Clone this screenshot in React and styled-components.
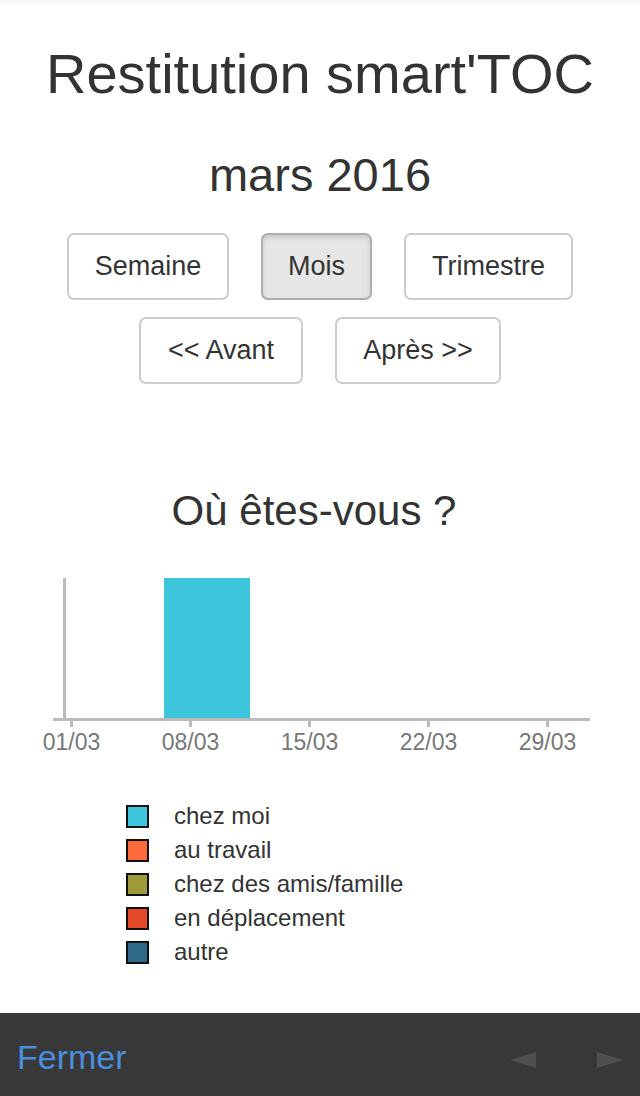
import React from 'react';
import styled, { createGlobalStyle } from 'styled-components';

const GlobalStyle = createGlobalStyle`
  html, body {
    margin: 0;
    padding: 0;
    background: #ffffff;
  }
  body {
    font-family: 'Liberation Sans', Arial, sans-serif;
    color: #333333;
  }
`;

const legend = [
  { label: "chez moi", color: "#3cc5db" },
  { label: "au travail", color: "#fd6a3b" },
  { label: "chez des amis/famille", color: "#9e9a3a" },
  { label: "en déplacement", color: "#e4492a" },
  { label: "autre", color: "#2f6a8a" },
];

const ticks = [
  { x: 71.5, label: "01/03" },
  { x: 190.5, label: "08/03" },
  { x: 309.5, label: "15/03" },
  { x: 428.5, label: "22/03" },
  { x: 547.5, label: "29/03" },
];

const Page = styled.div`
  display: flex;
  flex-direction: column;
  min-height: 100vh;
`;

const TopStrip = styled.div`
  height: 5px;
  background: #f8f8f8;
`;

const Title = styled.h1`
  margin: 37px 0 0;
  font-size: 56px;
  font-weight: 400;
  text-align: center;
  line-height: 64px;
  color: #333;
`;

const Period = styled.h2`
  margin: 43px 0 0;
  font-size: 47px;
  font-weight: 400;
  text-align: center;
  line-height: 52px;
  color: #333;
`;

const ButtonRow = styled.div`
  display: flex;
  justify-content: center;
  gap: 32px;
  margin-top: ${p => p.$top}px;
`;

const Button = styled.button`
  width: ${p => p.$w}px;
  height: 67px;
  padding: 0;
  font-family: 'Liberation Sans', Arial, sans-serif;
  font-size: 27px;
  color: #333;
  background: ${p => (p.$active ? '#e6e6e6' : '#ffffff')};
  border: 2px solid ${p => (p.$active ? '#adadad' : '#cccccc')};
  border-radius: 7px;
  box-shadow: ${p => (p.$active ? 'inset 0 3px 5px rgba(0,0,0,0.125)' : 'none')};
`;

const Question = styled.h3`
  margin: 103px 0 0;
  padding-right: 12px;
  font-size: 42px;
  font-weight: 400;
  text-align: center;
  line-height: 48px;
  color: #333;
`;

const Chart = styled.svg`
  display: block;
  margin-top: 35px;
`;

const Legend = styled.ul`
  list-style: none;
  margin: 39px 0 0;
  padding: 0 0 0 126px;
  display: flex;
  flex-direction: column;
`;

const LegendItem = styled.li`
  display: flex;
  align-items: center;
  height: 34px;
  font-size: 24px;
  color: #333;
`;

const Swatch = styled.span`
  width: 19px;
  height: 19px;
  border: 2px solid #111;
  background: ${p => p.$color};
  margin-right: 25px;
`;

const Footer = styled.footer`
  margin-top: auto;
  height: 83px;
  background: #383838;
  display: flex;
  align-items: center;
  padding: 0 17px;
`;

const CloseLink = styled.a`
  font-size: 34px;
  color: #4a8fde;
  text-decoration: none;
  margin-top: 5px;
`;

const Arrows = styled.div`
  margin-left: auto;
  display: flex;
  gap: 61px;
  margin-top: 11px;
`;

const Arrow = styled.svg`
  display: block;
`;

const App = () => {
  return (
    <Page>
      <GlobalStyle />
      <TopStrip />
      <Title>Restitution smart'TOC</Title>
      <Period>mars 2016</Period>

      <ButtonRow $top={32}>
        <Button $w={162}>Semaine</Button>
        <Button $w={111} $active>Mois</Button>
        <Button $w={169}>Trimestre</Button>
      </ButtonRow>
      <ButtonRow $top={17}>
        <Button $w={164}>&lt;&lt; Avant</Button>
        <Button $w={166}>Après &gt;&gt;</Button>
      </ButtonRow>

      <Question>Où êtes-vous ?</Question>

      <Chart width="640" height="190" viewBox="0 0 640 190">
        <rect x="164" y="8" width="86" height="141" fill="#3cc5db" />
        <rect x="63" y="8" width="3" height="142" fill="#bbbbbb" />
        <rect x="53" y="148" width="537" height="3" fill="#bbbbbb" />
        {ticks.map(t => (
          <g key={t.label}>
            <rect x={t.x - 1.5} y="151" width="3" height="6" fill="#bbbbbb" />
            <text
              x={t.x}
              y="180"
              textAnchor="middle"
              fontSize="23"
              fill="#777777"
              fontFamily="'Liberation Sans', Arial, sans-serif"
            >
              {t.label}
            </text>
          </g>
        ))}
      </Chart>

      <Legend>
        {legend.map(item => (
          <LegendItem key={item.label}>
            <Swatch $color={item.color} />
            {item.label}
          </LegendItem>
        ))}
      </Legend>

      <Footer>
        <CloseLink href="#">Fermer</CloseLink>
        <Arrows>
          <Arrow width="26" height="16" viewBox="0 0 26 16">
            <polygon points="0,8 26,0 26,16" fill="#4f4f4f" />
          </Arrow>
          <Arrow width="26" height="16" viewBox="0 0 26 16">
            <polygon points="0,0 26,8 0,16" fill="#4f4f4f" />
          </Arrow>
        </Arrows>
      </Footer>
    </Page>
  );
};

export default App;
